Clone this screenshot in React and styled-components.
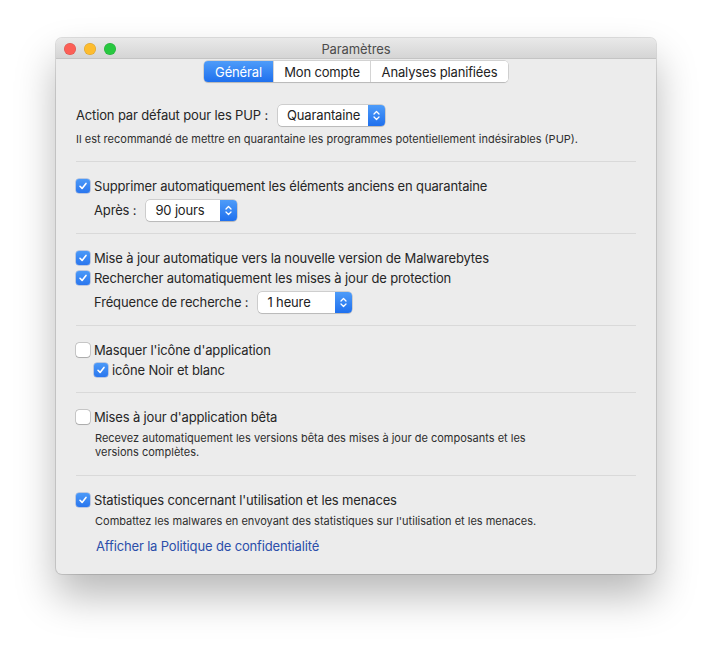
import React from 'react'
import styled, {createGlobalStyle} from 'styled-components'

const Global = createGlobalStyle`
  body {
    margin: 0;
    background: #ffffff;
    font-family: Inter, "Liberation Sans", sans-serif;
    -webkit-font-smoothing: antialiased;
  }
`

const Page = styled.div`
  width: 712px;
  height: 648px;
  padding: 38px 0 0 56px;
  box-sizing: border-box;
`

const Window = styled.div`
  width: 600px;
  height: 536px;
  background: #ececec;
  border-radius: 6px;
  box-shadow: 0 0 0 1px rgba(0,0,0,0.12), 0 22px 40px rgba(0,0,0,0.28);
  overflow: hidden;
  display: flex;
  flex-direction: column;
`

const TitleBar = styled.div`
  height: 23px;
  padding-top: 1px;
  box-sizing: border-box;
  position: relative;
  display: flex;
  align-items: center;
  justify-content: center;
  background: linear-gradient(#e9e9e9, #d5d5d5);
  border-bottom: 1px solid #c4c4c4;
  font-size: 13px;
  letter-spacing: -0.1px;
  color: #4c4c4c;
`

const Lights = styled.div`
  position: absolute;
  left: 8px;
  top: 5px;
  display: flex;
  gap: 8px;
`

const Light = styled.span`
  width: 12px;
  height: 12px;
  border-radius: 50%;
  background: ${p => p.color};
  box-shadow: inset 0 0 0 0.5px rgba(0,0,0,0.15);
`

const TabsRow = styled.div`
  display: flex;
  justify-content: center;
  margin-top: 2px;
`

const Tabs = styled.div`
  display: flex;
  height: 21px;
  border-radius: 4px;
  background: #fff;
  box-shadow: 0 0 0 0.5px rgba(0,0,0,0.22), 0 1px 1px rgba(0,0,0,0.12);
  overflow: hidden;
`

const Tab = styled.div`
  width: ${p => p.w}px;
  box-sizing: border-box;
  display: flex;
  align-items: center;
  justify-content: center;
  font-size: 13px;
  letter-spacing: -0.15px;
  color: ${p => (p.active ? '#fff' : '#222')};
  background: ${p => (p.active ? 'linear-gradient(#4e9cf9, #1f70ee)' : '#fff')};
  border-left: ${p => (p.first ? 'none' : '1px solid #d4d4d4')};
`

const Content = styled.div`
  padding: 0 20px;
  display: flex;
  flex-direction: column;
`

const Section = styled.div`
  padding: ${p => p.top}px 0 ${p => p.bottom}px;
  border-top: ${p => (p.first ? 'none' : '1px solid #d9d9d9')};
  display: flex;
  flex-direction: column;
`

const FieldRow = styled.div`
  height: 24px;
  display: flex;
  align-items: center;
  gap: ${p => p.gap || 10}px;
  margin: 2px 0 0 ${p => p.indent || 0}px;
  font-size: 13px;
  letter-spacing: -0.15px;
  color: #262626;
`

const CheckRow = styled.label`
  height: 20px;
  display: flex;
  align-items: center;
  gap: 4px;
  margin-left: ${p => p.indent || 0}px;
  font-size: 13px;
  letter-spacing: -0.15px;
  color: #262626;
`

const Box = styled.span`
  width: 14px;
  height: 14px;
  box-sizing: border-box;
  border-radius: 3px;
  display: flex;
  align-items: center;
  justify-content: center;
  background: ${p => (p.on ? 'linear-gradient(#4b99f8, #2a76ee)' : '#fff')};
  box-shadow: ${p => (p.on ? '0 0 0 0.5px rgba(0,60,180,0.4)' : '0 0 0 0.5px rgba(0,0,0,0.3), 0 0.5px 1px rgba(0,0,0,0.15)')};
`

const Note = styled.div`
  font-size: 11px;
  line-height: 14px;
  color: #2e2e2e;
  margin: ${p => p.mt || 0}px 0 0 ${p => p.indent || 0}px;
`

const Select = styled.div`
  width: ${p => p.w}px;
  height: 21px;
  display: flex;
  border-radius: 4px;
  background: #fff;
  box-shadow: 0 0 0 0.5px rgba(0,0,0,0.25), 0 1px 1px rgba(0,0,0,0.1);
  overflow: hidden;
`

const SelectValue = styled.div`
  flex: 1;
  display: flex;
  align-items: center;
  padding-left: 9px;
  font-size: 13px;
  color: #222;
`

const Stepper = styled.div`
  width: 17px;
  display: flex;
  align-items: center;
  justify-content: center;
  background: linear-gradient(#4e9cf9, #1f70ee);
`

const Link = styled.a`
  display: block;
  margin: 8px 0 0 20px;
  line-height: 20px;
  font-size: 13px;
  letter-spacing: -0.15px;
  color: #2b4eaa;
  text-decoration: none;
`

const Check = ({on, children, indent}) => (
  <CheckRow indent={indent}>
    <Box on={on}>
      {on && (
        <svg width="10" height="10" viewBox="0 0 10 10">
          <path d="M2 5.3 L4.1 7.4 L8 2.4" fill="none" stroke="#fff" strokeWidth="1.6" strokeLinecap="round" strokeLinejoin="round" />
        </svg>
      )}
    </Box>
    <span>{children}</span>
  </CheckRow>
)

const Popup = ({w, value}) => (
  <Select w={w}>
    <SelectValue>{value}</SelectValue>
    <Stepper>
      <svg width="9" height="13" viewBox="0 0 9 13">
        <path d="M2 5 L4.5 2.5 L7 5 M2 8 L4.5 10.5 L7 8" fill="none" stroke="#fff" strokeWidth="1.3" strokeLinecap="round" strokeLinejoin="round" />
      </svg>
    </Stepper>
  </Select>
)

export default function App() {
  return (
    <Page>
      <Global />
      <Window>
        <TitleBar>
          <Lights>
            <Light color="#fc5f57" />
            <Light color="#fdbc2e" />
            <Light color="#28c840" />
          </Lights>
          Paramètres
        </TitleBar>
        <TabsRow>
          <Tabs>
            <Tab first active w={69}>Général</Tab>
            <Tab w={97}>Mon compte</Tab>
            <Tab w={138}>Analyses planifiées</Tab>
          </Tabs>
        </TabsRow>
        <Content>
          <Section first top={19} bottom={15}>
            <FieldRow>
              Action par défaut pour les PUP :
              <Popup w={107} value="Quarantaine" />
            </FieldRow>
            <Note mt={5}>Il est recommandé de mettre en quarantaine les programmes potentiellement indésirables (PUP).</Note>
          </Section>
          <Section top={14} bottom={11}>
            <Check on>Supprimer automatiquement les éléments anciens en quarantaine</Check>
            <FieldRow indent={18}>
              Après :
              <Popup w={91} value="90 jours" />
            </FieldRow>
          </Section>
          <Section top={14} bottom={11}>
            <Check on>Mise à jour automatique vers la nouvelle version de Malwarebytes</Check>
            <Check on>Rechercher automatiquement les mises à jour de protection</Check>
            <FieldRow indent={18}>
              Fréquence de recherche :
              <Popup w={94} value="1 heure" />
            </FieldRow>
          </Section>
          <Section top={14} bottom={12}>
            <Check>Masquer l'icône d'application</Check>
            <Check on indent={18}>icône Noir et blanc</Check>
          </Section>
          <Section top={14} bottom={16}>
            <Check>Mises à jour d'application bêta</Check>
            <Note mt={4} indent={19}>
              Recevez automatiquement les versions bêta des mises à jour de composants et les<br />
              versions complètes.
            </Note>
          </Section>
          <Section top={14} bottom={18}>
            <Check on>Statistiques concernant l'utilisation et les menaces</Check>
            <Note mt={4} indent={19}>Combattez les malwares en envoyant des statistiques sur l'utilisation et les menaces.</Note>
            <Link href="#">Afficher la Politique de confidentialité</Link>
          </Section>
        </Content>
      </Window>
    </Page>
  )
}
